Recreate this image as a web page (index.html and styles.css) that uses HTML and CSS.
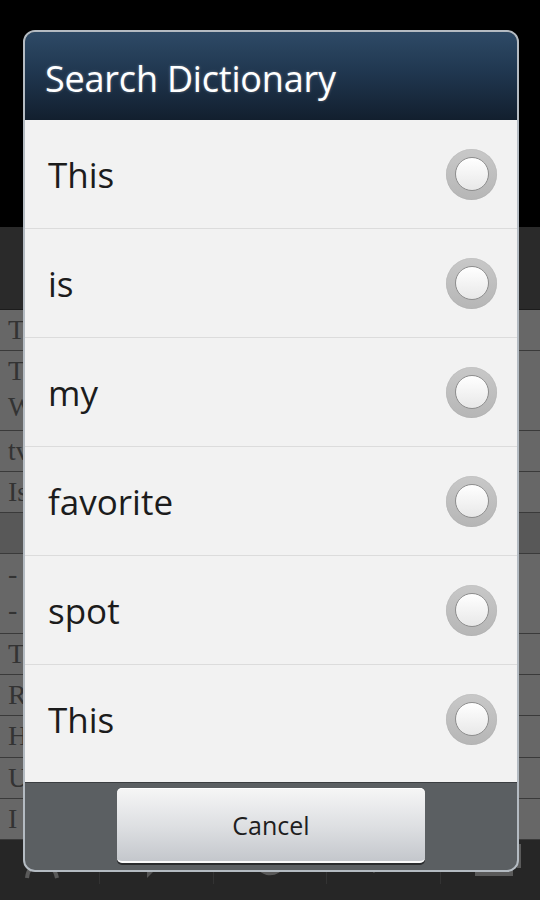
FILE: index.html
```html
<!DOCTYPE html>
<html>
<head>
<meta charset="utf-8">
<link rel="stylesheet" href="styles.css">
</head>
<body>
<div class="screen">
  <div class="top-black"></div>
  <div class="dark-band"></div>
  <div class="bg-rows">
    <div class="bg-row">T</div>
    <div class="bg-row two">T<br>W</div>
    <div class="bg-row">tv</div>
    <div class="bg-row">Is</div>
    <div class="bg-row blank"></div>
    <div class="bg-row two">-<br>-</div>
    <div class="bg-row">T</div>
    <div class="bg-row">R</div>
    <div class="bg-row">H</div>
    <div class="bg-row">U</div>
    <div class="bg-row">I</div>
  </div>
  <div class="navbar">
    <svg class="nav-icon" width="60" height="40" viewBox="0 0 60 40"><path d="M14 34 C16 14 40 14 44 34" fill="none" stroke="#5a5a5a" stroke-width="4"/></svg>
    <span class="nav-sep"></span>
    <svg class="nav-icon" width="60" height="40" viewBox="0 0 60 40"><path d="M10 8 H50 V26 H28 L20 34 V26 H10 Z" fill="#555"/></svg>
    <span class="nav-sep"></span>
    <svg class="nav-icon" width="60" height="40" viewBox="0 0 60 40"><path d="M16 12 A14 14 0 1 0 44 18" fill="none" stroke="#5a5a5a" stroke-width="4"/></svg>
    <span class="nav-sep"></span>
    <svg class="nav-icon" width="60" height="40" viewBox="0 0 60 40"><path d="M14 20 H54 M20 6 H50 V16 H20 Z M14 20 L22 28" fill="none" stroke="#5a5a5a" stroke-width="3"/></svg>
    <span class="nav-sep"></span>
    <svg class="nav-icon" width="60" height="40" viewBox="0 0 60 40"><path d="M10 6 H44 V30 H10 Z M36 2 H52 V24" fill="none" stroke="#5a5a5a" stroke-width="4"/></svg>
  </div>
</div>

<div class="dialog">
  <div class="dialog-title">Search Dictionary</div>
  <div class="dialog-list">
    <div class="item"><span class="item-label">This</span><span class="radio"></span></div>
    <div class="item"><span class="item-label">is</span><span class="radio"></span></div>
    <div class="item"><span class="item-label">my</span><span class="radio"></span></div>
    <div class="item"><span class="item-label">favorite</span><span class="radio"></span></div>
    <div class="item"><span class="item-label">spot</span><span class="radio"></span></div>
    <div class="item last"><span class="item-label">This</span><span class="radio"></span></div>
  </div>
  <div class="dialog-footer">
    <button class="btn">Cancel</button>
  </div>
</div>
</body>
</html>
```
FILE: styles.css
```css
html, body {
  margin: 0;
  padding: 0;
  background: #000;
}
body {
  width: 540px;
  height: 900px;
  overflow: hidden;
  position: relative;
  font-family: "Open Sans", "DejaVu Sans", sans-serif;
}
.screen {
  width: 540px;
  height: 900px;
  display: flex;
  flex-direction: column;
}
.top-black {
  height: 227px;
  background: #000;
}
.dark-band {
  height: 82px;
  background: #2a2a2a;
  border-bottom: 1px solid #1c1c1c;
}
.bg-rows {
  flex: 1;
  display: flex;
  flex-direction: column;
  background: #5c5c5c;
  overflow: hidden;
}
.bg-row {
  height: 41px;
  border-bottom: 1px solid #3a3a3a;
  font-family: "Liberation Serif", serif;
  font-size: 28px;
  line-height: 40px;
  color: #333;
  padding-left: 8px;
  background: #676767;
}
.bg-row.two {
  height: 78px;
  line-height: 36px;
  padding-top: 2px;
}
.bg-row.blank {
  background: #585858;
}
.navbar {
  height: 60px;
  background: #262626;
  display: flex;
  align-items: flex-start;
  justify-content: space-around;
  padding-top: 4px;
  box-sizing: border-box;
}
.nav-sep {
  width: 1px;
  height: 40px;
  background: #333;
}
.nav-icon {
  display: block;
}

/* dialog overlay */
.dialog {
  position: absolute;
  left: 23px;
  top: 30px;
  width: 496px;
  height: 842px;
  box-sizing: border-box;
  border: 2px solid #b4bbc2;
  border-radius: 12px;
  overflow: hidden;
  display: flex;
  flex-direction: column;
  background: #5b5f62;
}
.dialog-title {
  height: 88px;
  flex: none;
  box-sizing: border-box;
  padding: 5px 0 0 20px;
  display: flex;
  align-items: center;
  color: #fff;
  font-size: 36px;
  letter-spacing: -0.2px;
  background: linear-gradient(#2e4a66 0%, #203750 45%, #121f2e 100%);
  text-shadow: 0 0 3px rgba(255,255,255,0.35);
}
.dialog-list {
  height: 662px;
  flex: none;
  background: #f2f2f2;
  overflow: hidden;
}
.item {
  height: 108px;
  border-bottom: 1px solid #dcdcdc;
  display: flex;
  align-items: center;
  justify-content: space-between;
  padding: 0 20px 0 23px;
}
.item.last {
  border-bottom: none;
}
.item-label {
  font-size: 35px;
  color: #1c1c1c;
}
.radio {
  width: 51px;
  height: 51px;
  border-radius: 50%;
  background: linear-gradient(#c8c8c8, #b6b6b6);
  display: flex;
  align-items: center;
  justify-content: center;
  box-shadow: inset 0 0 1px rgba(0,0,0,0.2);
}
.radio::after {
  content: "";
  width: 32px;
  height: 32px;
  border-radius: 50%;
  border: 1px solid #8e8e8e;
  background: linear-gradient(#ffffff, #e8e8e8);
}
.dialog-footer {
  flex: 1;
  border-top: 1px solid #3b3e41;
  display: flex;
  justify-content: center;
  padding-top: 5px;
  box-sizing: border-box;
}
.btn {
  width: 308px;
  height: 75px;
  border: none;
  border-radius: 5px;
  background: linear-gradient(#f6f6f6 0%, #dcdee1 55%, #c4c7cc 100%);
  border-bottom: 2px solid #fafafa;
  box-shadow: 0 2px 0 #2a2c2e, inset 0 1px 0 #ffffff;
  font-family: "Open Sans", "DejaVu Sans", sans-serif;
  font-size: 25px;
  color: #1e1e1e;
  padding: 0;
}
```
